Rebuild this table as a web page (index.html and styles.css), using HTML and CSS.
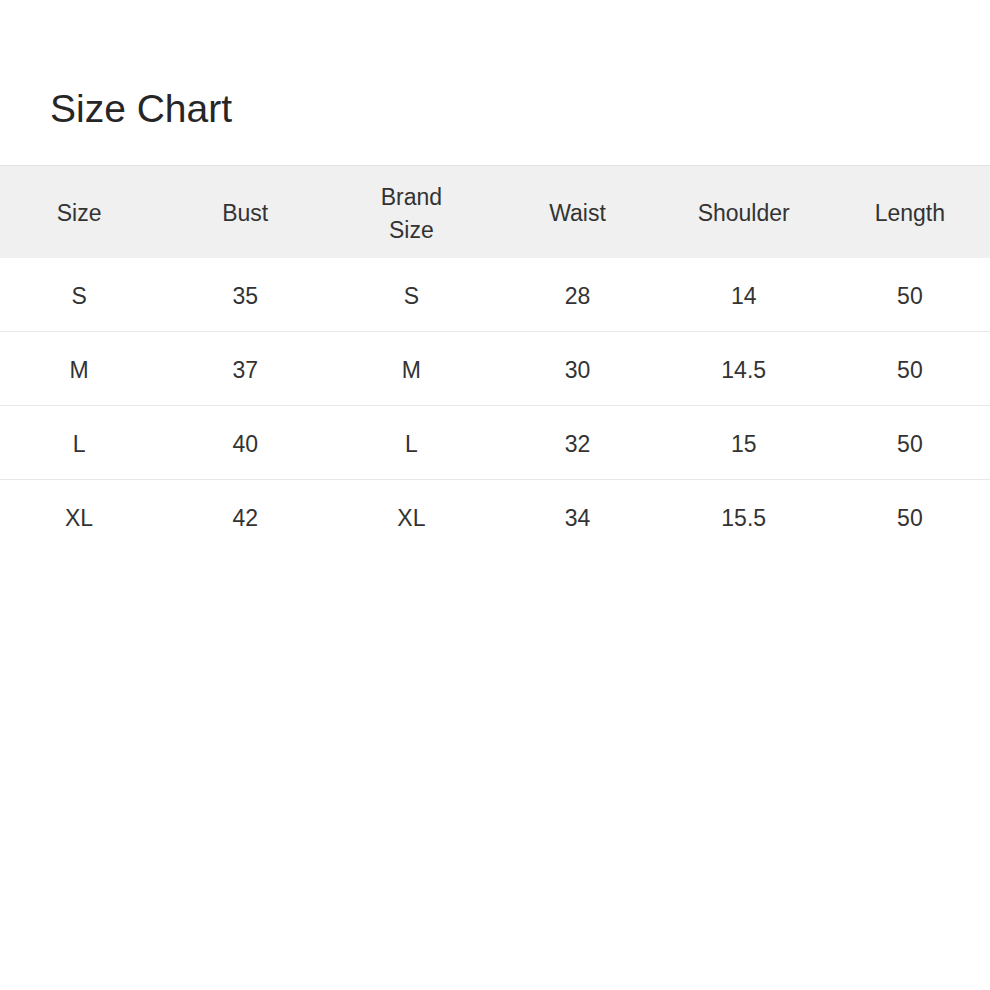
FILE: index.html
```html
<!DOCTYPE html>
<html lang="en">
<head>
<meta charset="utf-8">
<title>Size Chart</title>
<link rel="stylesheet" href="styles.css">
</head>
<body>
<div class="page">
  <h1 class="title">Size Chart</h1>
  <table class="chart">
    <thead>
      <tr>
        <th>Size</th>
        <th>Bust</th>
        <th>Brand<br>Size</th>
        <th>Waist</th>
        <th>Shoulder</th>
        <th>Length</th>
      </tr>
    </thead>
    <tbody>
      <tr><td>S</td><td>35</td><td>S</td><td>28</td><td>14</td><td>50</td></tr>
      <tr><td>M</td><td>37</td><td>M</td><td>30</td><td>14.5</td><td>50</td></tr>
      <tr><td>L</td><td>40</td><td>L</td><td>32</td><td>15</td><td>50</td></tr>
      <tr><td>XL</td><td>42</td><td>XL</td><td>34</td><td>15.5</td><td>50</td></tr>
    </tbody>
  </table>
</div>
</body>
</html>
```

FILE: styles.css
```css
html, body {
  margin: 0;
  padding: 0;
  background: #ffffff;
  overflow: hidden;
}

body {
  font-family: "Liberation Sans", Arial, sans-serif;
  color: #333333;
}

.page {
  padding-top: 86px;
}

.title {
  margin: 0 0 33px 50px;
  font-size: 39px;
  line-height: 46px;
  font-weight: 400;
  color: #262626;
}

.chart {
  width: 997px;
  margin-left: -4px;
  border-collapse: collapse;
  table-layout: fixed;
}

.chart th,
.chart td {
  padding: 3px 0 0 0;
  text-align: center;
  vertical-align: middle;
  font-size: 23px;
  line-height: 33px;
  font-weight: 400;
  color: #333333;
}

.chart thead tr {
  background: #f0f0f0;
  border-top: 1px solid #e3e3e3;
}

.chart th {
  height: 89px;
}

.chart td {
  height: 70px;
}

.chart tbody tr {
  border-bottom: 1px solid #e8e8e8;
}

.chart tbody tr:last-child {
  border-bottom: none;
}
```
